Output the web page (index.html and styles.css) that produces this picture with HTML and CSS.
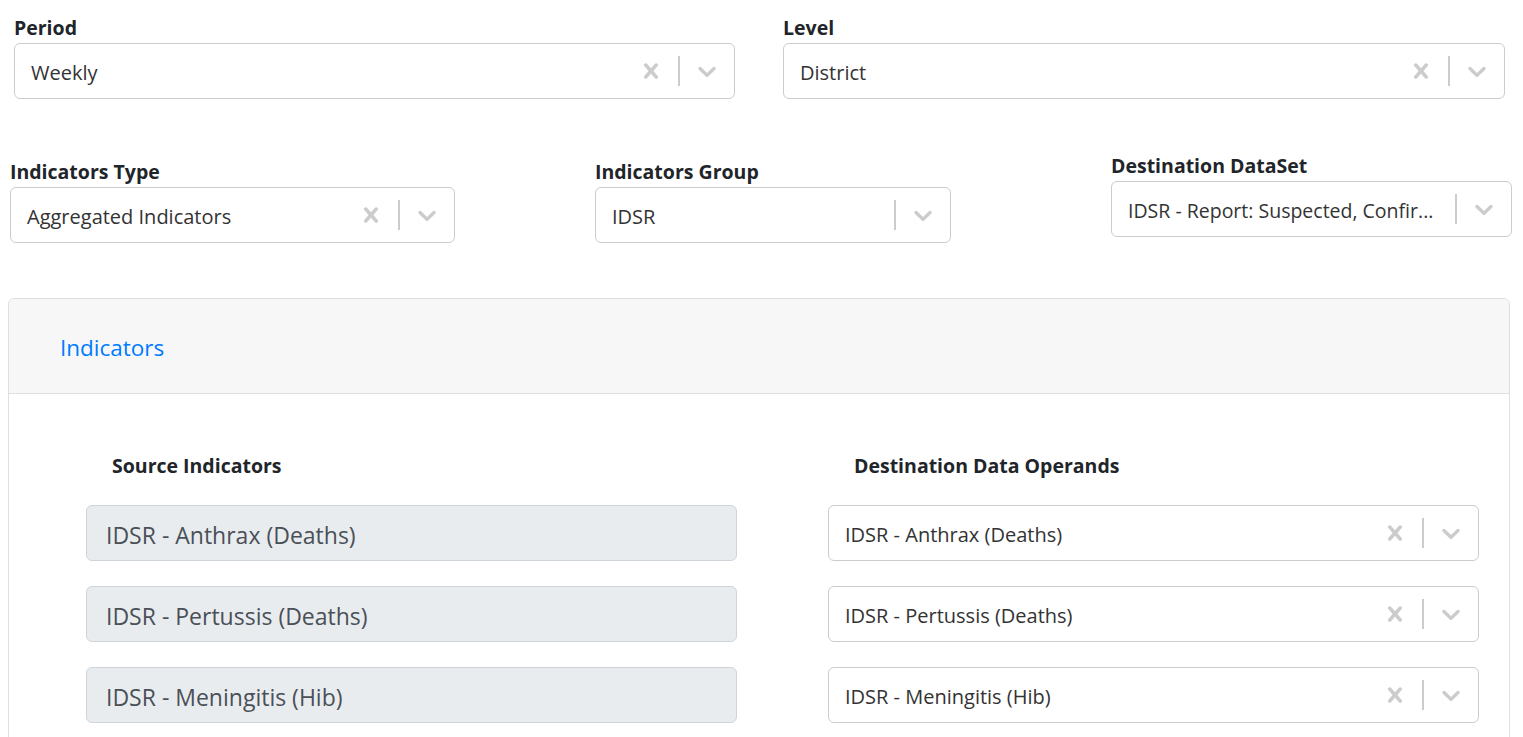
FILE: index.html
```html
<!DOCTYPE html>
<html lang="en">
<head>
<meta charset="utf-8">
<title>Indicator mapping</title>
<link rel="stylesheet" href="styles.css">
</head>
<body>
<div class="page">
  <div class="row row-top">
    <div class="field f-period">
      <label class="label">Period</label>
      <div class="select">
        <div class="value">Weekly</div>
        <div class="indicators">
          <span class="ind"><svg viewBox="0 0 20 20"><path d="M14.348 14.849c-0.469 0.469-1.229 0.469-1.697 0l-2.651-3.030-2.651 3.029c-0.469 0.469-1.229 0.469-1.697 0-0.469-0.469-0.469-1.229 0-1.697l2.758-3.15-2.759-3.152c-0.469-0.469-0.469-1.228 0-1.697s1.228-0.469 1.697 0l2.652 3.031 2.651-3.031c0.469-0.469 1.228-0.469 1.697 0s0.469 1.229 0 1.697l-2.758 3.152 2.758 3.150c0.469 0.469 0.469 1.229 0 1.698z"/></svg></span>
          <span class="sep"></span>
          <span class="ind"><svg viewBox="0 0 20 20"><path d="M4.516 7.548c0.436-0.446 1.043-0.481 1.576 0l3.908 3.747 3.908-3.747c0.533-0.481 1.141-0.446 1.574 0 0.436 0.445 0.408 1.197 0 1.615-0.406 0.418-4.695 4.502-4.695 4.502-0.217 0.223-0.502 0.335-0.787 0.335s-0.57-0.112-0.789-0.335c0 0-4.287-4.084-4.695-4.502s-0.436-1.17 0-1.615z"/></svg></span>
        </div>
      </div>
    </div>
    <div class="field f-level">
      <label class="label">Level</label>
      <div class="select">
        <div class="value">District</div>
        <div class="indicators">
          <span class="ind"><svg viewBox="0 0 20 20"><path d="M14.348 14.849c-0.469 0.469-1.229 0.469-1.697 0l-2.651-3.030-2.651 3.029c-0.469 0.469-1.229 0.469-1.697 0-0.469-0.469-0.469-1.229 0-1.697l2.758-3.15-2.759-3.152c-0.469-0.469-0.469-1.228 0-1.697s1.228-0.469 1.697 0l2.652 3.031 2.651-3.031c0.469-0.469 1.228-0.469 1.697 0s0.469 1.229 0 1.697l-2.758 3.152 2.758 3.150c0.469 0.469 0.469 1.229 0 1.698z"/></svg></span>
          <span class="sep"></span>
          <span class="ind"><svg viewBox="0 0 20 20"><path d="M4.516 7.548c0.436-0.446 1.043-0.481 1.576 0l3.908 3.747 3.908-3.747c0.533-0.481 1.141-0.446 1.574 0 0.436 0.445 0.408 1.197 0 1.615-0.406 0.418-4.695 4.502-4.695 4.502-0.217 0.223-0.502 0.335-0.787 0.335s-0.57-0.112-0.789-0.335c0 0-4.287-4.084-4.695-4.502s-0.436-1.17 0-1.615z"/></svg></span>
        </div>
      </div>
    </div>
  </div>

  <div class="row row-second">
    <div class="field f-type">
      <label class="label">Indicators Type</label>
      <div class="select">
        <div class="value">Aggregated Indicators</div>
        <div class="indicators">
          <span class="ind"><svg viewBox="0 0 20 20"><path d="M14.348 14.849c-0.469 0.469-1.229 0.469-1.697 0l-2.651-3.030-2.651 3.029c-0.469 0.469-1.229 0.469-1.697 0-0.469-0.469-0.469-1.229 0-1.697l2.758-3.15-2.759-3.152c-0.469-0.469-0.469-1.228 0-1.697s1.228-0.469 1.697 0l2.652 3.031 2.651-3.031c0.469-0.469 1.228-0.469 1.697 0s0.469 1.229 0 1.697l-2.758 3.152 2.758 3.150c0.469 0.469 0.469 1.229 0 1.698z"/></svg></span>
          <span class="sep"></span>
          <span class="ind"><svg viewBox="0 0 20 20"><path d="M4.516 7.548c0.436-0.446 1.043-0.481 1.576 0l3.908 3.747 3.908-3.747c0.533-0.481 1.141-0.446 1.574 0 0.436 0.445 0.408 1.197 0 1.615-0.406 0.418-4.695 4.502-4.695 4.502-0.217 0.223-0.502 0.335-0.787 0.335s-0.57-0.112-0.789-0.335c0 0-4.287-4.084-4.695-4.502s-0.436-1.17 0-1.615z"/></svg></span>
        </div>
      </div>
    </div>
    <div class="field f-group">
      <label class="label">Indicators Group</label>
      <div class="select">
        <div class="value">IDSR</div>
        <div class="indicators">
          <span class="sep"></span>
          <span class="ind"><svg viewBox="0 0 20 20"><path d="M4.516 7.548c0.436-0.446 1.043-0.481 1.576 0l3.908 3.747 3.908-3.747c0.533-0.481 1.141-0.446 1.574 0 0.436 0.445 0.408 1.197 0 1.615-0.406 0.418-4.695 4.502-4.695 4.502-0.217 0.223-0.502 0.335-0.787 0.335s-0.57-0.112-0.789-0.335c0 0-4.287-4.084-4.695-4.502s-0.436-1.17 0-1.615z"/></svg></span>
        </div>
      </div>
    </div>
    <div class="field f-dataset">
      <label class="label">Destination DataSet</label>
      <div class="select">
        <div class="value value-clip">IDSR - Report: Suspected, Confir...</div>
        <div class="indicators">
          <span class="sep"></span>
          <span class="ind"><svg viewBox="0 0 20 20"><path d="M4.516 7.548c0.436-0.446 1.043-0.481 1.576 0l3.908 3.747 3.908-3.747c0.533-0.481 1.141-0.446 1.574 0 0.436 0.445 0.408 1.197 0 1.615-0.406 0.418-4.695 4.502-4.695 4.502-0.217 0.223-0.502 0.335-0.787 0.335s-0.57-0.112-0.789-0.335c0 0-4.287-4.084-4.695-4.502s-0.436-1.17 0-1.615z"/></svg></span>
        </div>
      </div>
    </div>
  </div>

  <div class="card">
    <div class="card-header">
      <span class="tab">Indicators</span>
    </div>
    <div class="card-body">
      <div class="map-grid">
        <div class="col-head">Source Indicators</div>
        <div class="col-head">Destination Data Operands</div>

        <div class="src">IDSR - Anthrax (Deaths)</div>
        <div class="select">
          <div class="value">IDSR - Anthrax (Deaths)</div>
          <div class="indicators">
            <span class="ind"><svg viewBox="0 0 20 20"><path d="M14.348 14.849c-0.469 0.469-1.229 0.469-1.697 0l-2.651-3.030-2.651 3.029c-0.469 0.469-1.229 0.469-1.697 0-0.469-0.469-0.469-1.229 0-1.697l2.758-3.15-2.759-3.152c-0.469-0.469-0.469-1.228 0-1.697s1.228-0.469 1.697 0l2.652 3.031 2.651-3.031c0.469-0.469 1.228-0.469 1.697 0s0.469 1.229 0 1.697l-2.758 3.152 2.758 3.150c0.469 0.469 0.469 1.229 0 1.698z"/></svg></span>
            <span class="sep"></span>
            <span class="ind"><svg viewBox="0 0 20 20"><path d="M4.516 7.548c0.436-0.446 1.043-0.481 1.576 0l3.908 3.747 3.908-3.747c0.533-0.481 1.141-0.446 1.574 0 0.436 0.445 0.408 1.197 0 1.615-0.406 0.418-4.695 4.502-4.695 4.502-0.217 0.223-0.502 0.335-0.787 0.335s-0.57-0.112-0.789-0.335c0 0-4.287-4.084-4.695-4.502s-0.436-1.17 0-1.615z"/></svg></span>
          </div>
        </div>

        <div class="src">IDSR - Pertussis (Deaths)</div>
        <div class="select">
          <div class="value">IDSR - Pertussis (Deaths)</div>
          <div class="indicators">
            <span class="ind"><svg viewBox="0 0 20 20"><path d="M14.348 14.849c-0.469 0.469-1.229 0.469-1.697 0l-2.651-3.030-2.651 3.029c-0.469 0.469-1.229 0.469-1.697 0-0.469-0.469-0.469-1.229 0-1.697l2.758-3.15-2.759-3.152c-0.469-0.469-0.469-1.228 0-1.697s1.228-0.469 1.697 0l2.652 3.031 2.651-3.031c0.469-0.469 1.228-0.469 1.697 0s0.469 1.229 0 1.697l-2.758 3.152 2.758 3.150c0.469 0.469 0.469 1.229 0 1.698z"/></svg></span>
            <span class="sep"></span>
            <span class="ind"><svg viewBox="0 0 20 20"><path d="M4.516 7.548c0.436-0.446 1.043-0.481 1.576 0l3.908 3.747 3.908-3.747c0.533-0.481 1.141-0.446 1.574 0 0.436 0.445 0.408 1.197 0 1.615-0.406 0.418-4.695 4.502-4.695 4.502-0.217 0.223-0.502 0.335-0.787 0.335s-0.57-0.112-0.789-0.335c0 0-4.287-4.084-4.695-4.502s-0.436-1.17 0-1.615z"/></svg></span>
          </div>
        </div>

        <div class="src">IDSR - Meningitis (Hib)</div>
        <div class="select">
          <div class="value">IDSR - Meningitis (Hib)</div>
          <div class="indicators">
            <span class="ind"><svg viewBox="0 0 20 20"><path d="M14.348 14.849c-0.469 0.469-1.229 0.469-1.697 0l-2.651-3.030-2.651 3.029c-0.469 0.469-1.229 0.469-1.697 0-0.469-0.469-0.469-1.229 0-1.697l2.758-3.15-2.759-3.152c-0.469-0.469-0.469-1.228 0-1.697s1.228-0.469 1.697 0l2.652 3.031 2.651-3.031c0.469-0.469 1.228-0.469 1.697 0s0.469 1.229 0 1.697l-2.758 3.152 2.758 3.150c0.469 0.469 0.469 1.229 0 1.698z"/></svg></span>
            <span class="sep"></span>
            <span class="ind"><svg viewBox="0 0 20 20"><path d="M4.516 7.548c0.436-0.446 1.043-0.481 1.576 0l3.908 3.747 3.908-3.747c0.533-0.481 1.141-0.446 1.574 0 0.436 0.445 0.408 1.197 0 1.615-0.406 0.418-4.695 4.502-4.695 4.502-0.217 0.223-0.502 0.335-0.787 0.335s-0.57-0.112-0.789-0.335c0 0-4.287-4.084-4.695-4.502s-0.436-1.17 0-1.615z"/></svg></span>
          </div>
        </div>
      </div>
    </div>
  </div>
</div>
</body>
</html>
```

FILE: styles.css
```css
* { box-sizing: border-box; }

html, body {
  margin: 0;
  padding: 0;
  background: #ffffff;
}

body {
  font-family: "Open Sans", "Noto Sans", "Liberation Sans", sans-serif;
  color: #212529;
  overflow: hidden;
}

.page {
  width: 1523px;
}

.row {
  display: flex;
  align-items: flex-start;
}

.row-top {
  padding-top: 16px;
  padding-left: 14px;
}

.row-second {
  margin-top: 61px;
  padding-left: 10px;
}

.field {
  display: flex;
  flex-direction: column;
}

.f-period { width: 721px; }
.f-level { width: 722px; margin-left: 48px; }
.f-type { width: 445px; }
.f-group { width: 356px; margin-left: 140px; }
.f-dataset { width: 401px; margin-left: 160px; margin-top: -6px; }

.label {
  display: block;
  font-size: 19.5px;
  font-weight: 700;
  line-height: 24px;
  height: 24px;
  margin-bottom: 3px;
  color: #212529;
  white-space: nowrap;
}

.select {
  display: flex;
  align-items: center;
  height: 56px;
  border: 1px solid #cccccc;
  border-radius: 6px;
  background: #ffffff;
}

.value {
  flex: 1;
  min-width: 0;
  padding-left: 16px;
  padding-right: 4px;
  padding-top: 2px;
  font-size: 20px;
  color: #333333;
  white-space: nowrap;
  overflow: hidden;
}

.value-clip {
  font-size: 19.5px;
}

.indicators {
  display: flex;
  align-items: center;
  align-self: stretch;
  flex-shrink: 0;
}

.ind {
  display: flex;
  align-items: center;
  padding: 12px;
}

.ind svg {
  width: 30px;
  height: 30px;
  fill: #cccccc;
  display: block;
}

.sep {
  width: 2px;
  height: 30px;
  background: #cccccc;
}

.card {
  margin-top: 55px;
  margin-left: 8px;
  width: 1502px;
  height: 460px;
  border: 1px solid #dfdfdf;
  border-radius: 6px;
  background: #ffffff;
}

.card-header {
  height: 95px;
  background: #f7f7f7;
  border-bottom: 1px solid #dfdfdf;
  border-radius: 6px 6px 0 0;
  display: flex;
  align-items: center;
  padding-left: 51px;
  padding-top: 4px;
}

.tab {
  font-size: 22.5px;
  color: #007bff;
  line-height: 30px;
}

.card-body {
  padding: 60px 30px 0 77px;
}

.map-grid {
  display: grid;
  grid-template-columns: 651px 651px;
  column-gap: 91px;
  row-gap: 25px;
}

.col-head {
  font-size: 19.5px;
  font-weight: 700;
  line-height: 24px;
  padding-left: 26px;
  margin-bottom: 2px;
  color: #212529;
  white-space: nowrap;
}

.src {
  height: 56px;
  display: flex;
  align-items: center;
  padding-left: 19px;
  padding-top: 3px;
  background: #e9ecef;
  border: 1px solid #ced4da;
  border-radius: 6px;
  font-size: 23px;
  color: #495057;
  white-space: nowrap;
}
```
